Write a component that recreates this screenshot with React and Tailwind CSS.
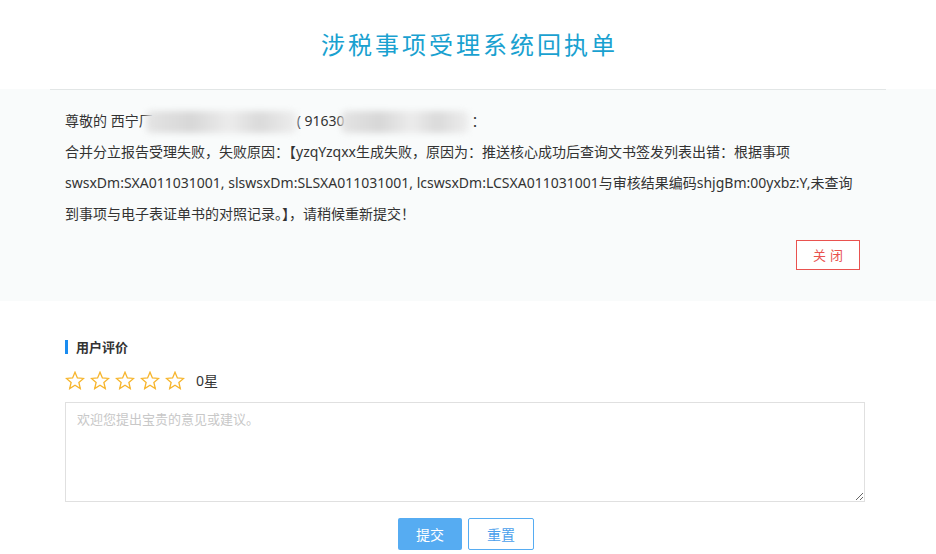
import React, { useState } from "react";

const font = { fontFamily: '"Segoe UI", "Noto Sans", "Noto Sans CJK SC", sans-serif' };
const titleFont = { fontFamily: '"Noto Sans CJK SC", sans-serif' };

function Star() {
  return (
    <svg width="20" height="19" viewBox="0 0 24 23" fill="none">
      <polygon
        points="12,1.5 14.9,8.4 22.4,9 16.7,13.9 18.4,21.2 12,17.3 5.6,21.2 7.3,13.9 1.6,9 9.1,8.4"
        stroke="#f7b52c"
        strokeWidth="1.6"
        strokeLinejoin="miter"
      />
    </svg>
  );
}

// masked (blurred) part of the name / tax number
function Blur({ w, ml }) {
  return (
    <span
      className="relative z-10 inline-block align-middle h-[22px] blur-[3px] bg-[linear-gradient(90deg,#e4e4e4,#d7d7d7_30%,#ececec_55%,#dadada_75%,#eeeeee)] rounded-md"
      style={{ width: w, marginLeft: ml }}
    />
  );
}

export default function App() {
  const [comment, setComment] = useState("");

  return (
    <div className="w-[936px] min-h-[554px] bg-white text-[#333]" style={font}>
      <div className="h-[89px] flex items-center justify-center">
        <h1 className="text-[24px] tracking-[3px] text-[#19a1d0] font-normal leading-none pl-[3px] mt-[-2px]" style={titleFont}>
          涉税事项受理系统回执单
        </h1>
      </div>

      <div className="bg-[#f9fbfb]">
        <div className="mx-[50px] border-t border-[#e2e6e6]" />
        <div className="pl-[65px] pr-[72px] pt-[15px] pb-[31px] text-[14px] leading-[31px]">
          <p>
            尊敬的 西宁厂
            <Blur w={151} ml={-7} />
            <span>( 91630</span>
            <Blur w={128} ml={-4} />
            <span className="ml-[3px]">：</span>
          </p>
          <p>
            合并分立报告受理失败，失败原因：【yzqYzqxx生成失败，原因为：推送核心成功后查询文书签发列表出错：根据事项
            swsxDm:SXA011031001, slswsxDm:SLSXA011031001, lcswsxDm:LCSXA011031001与审核结果编码shjgBm:00yxbz:Y,未查询到事项与电子表证单书的对照记录。】，请稍候重新提交！
          </p>
          <div className="flex justify-end mt-[11px] pr-[4px]">
            <button className="w-[64px] h-[30px] border border-[#e9524f] text-[#e9524f] text-[13px] tracking-[4px] pl-[4px] bg-white leading-none">
              关闭
            </button>
          </div>
        </div>
      </div>

      <div className="px-[65px] pt-[39px]">
        <div className="flex items-center h-[14px]">
          <span className="w-[3px] h-[14px] bg-[#1a8cf0]" />
          <span className="ml-[8px] text-[13px] font-bold text-[#333] leading-none">用户评价</span>
        </div>
        <div className="flex items-center mt-[15px] h-[22px]">
          <div className="flex gap-[5px]">
            <Star />
            <Star />
            <Star />
            <Star />
            <Star />
          </div>
          <span className="ml-[11px] text-[14px] text-[#333]">0星</span>
        </div>
        <textarea
          value={comment}
          onChange={(e) => setComment(e.target.value)}
          placeholder="欢迎您提出宝贵的意见或建议。"
          className="block mt-[11px] w-[800px] h-[100px] border border-[#e0e0e0] px-[11px] py-[7px] text-[13px] placeholder:text-[#c8c8c8] outline-none resize-y"
          style={font}
        />
        <div className="flex justify-center gap-[6px] mt-[16px] pr-[4px]">
          <button className="w-[64px] h-[32px] rounded-[2px] bg-[#56acf2] text-white text-[14px]">提交</button>
          <button className="w-[66px] h-[32px] rounded-[2px] border border-[#56acf2] text-[#4aa0ec] bg-white text-[14px]">重置</button>
        </div>
      </div>
    </div>
  );
}
